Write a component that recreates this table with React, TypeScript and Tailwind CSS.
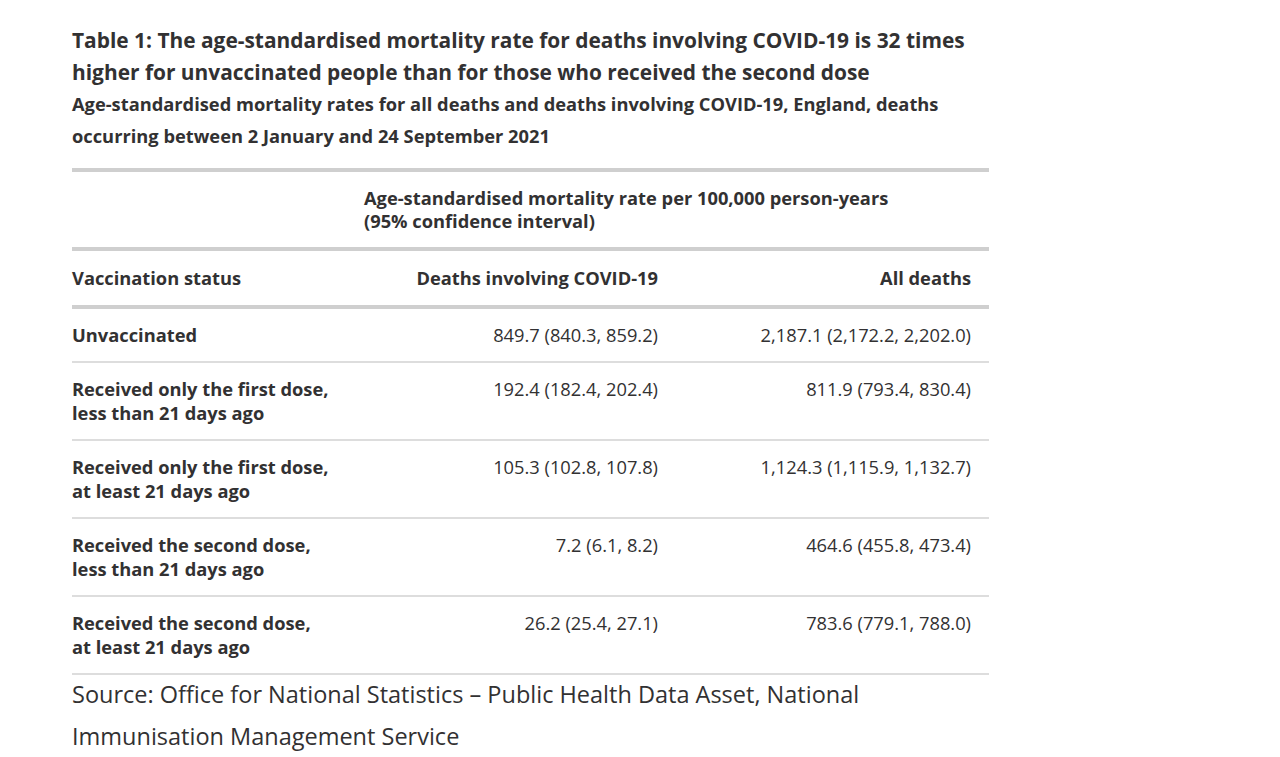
export default function App() {
  const rows = [
    ["Unvaccinated", "", "849.7 (840.3, 859.2)", "2,187.1 (2,172.2, 2,202.0)"],
    ["Received only the first dose,", "less than 21 days ago", "192.4 (182.4, 202.4)", "811.9 (793.4, 830.4)"],
    ["Received only the first dose,", "at least 21 days ago", "105.3 (102.8, 107.8)", "1,124.3 (1,115.9, 1,132.7)"],
    ["Received the second dose,", "less than 21 days ago", "7.2 (6.1, 8.2)", "464.6 (455.8, 473.4)"],
    ["Received the second dose,", "at least 21 days ago", "26.2 (25.4, 27.1)", "783.6 (779.1, 788.0)"],
  ];

  return (
    <div className="min-h-[757px] bg-white pl-[72px] pt-[24px] text-[#323132] font-['Open_Sans',sans-serif]">
      <h1 className="text-[20.9px] font-bold leading-[32px] w-[920px]">
        Table 1: The age-standardised mortality rate for deaths involving COVID-19 is 32 times higher for unvaccinated people than for those who received the second dose
      </h1>
      <h2 className="text-[18.3px] font-bold leading-[32px] w-[900px]">
        Age-standardised mortality rates for all deaths and deaths involving COVID-19, England, deaths occurring between 2 January and 24 September 2021
      </h2>

      <table className="mt-[16px] w-[917px] border-collapse text-[18.3px] leading-[24px]">
        <thead>
          <tr className="border-t-4 border-[#cfcfcf]">
            <th className="w-[292px]"></th>
            <th colSpan={2} className="pt-[14px] pb-[15px] text-left font-bold leading-[23px]">
              Age-standardised mortality rate per 100,000 person-years
              <br />
              (95% confidence interval)
            </th>
          </tr>
          <tr className="border-t-4 border-b-4 border-[#cfcfcf]">
            <th className="py-[15px] text-left font-bold">Vaccination status</th>
            <th className="w-[312px] py-[15px] pr-[18px] text-right font-bold">Deaths involving COVID-19</th>
            <th className="py-[15px] pr-[18px] text-right font-bold">All deaths</th>
          </tr>
        </thead>
        <tbody>
          {rows.map((r, i) => (
            <tr key={i} className="border-b-2 border-[#dddddd] align-top">
              <td className="py-[14px] font-bold">
                {r[0]}
                {r[1] && (
                  <>
                    <br />
                    {r[1]}
                  </>
                )}
              </td>
              <td className="py-[14px] pr-[18px] text-right">{r[2]}</td>
              <td className="py-[14px] pr-[18px] text-right">{r[3]}</td>
            </tr>
          ))}
        </tbody>
      </table>

      <p className="-mt-[2px] w-[900px] text-[23.5px] leading-[42px]">
        Source: Office for National Statistics – Public Health Data Asset, National Immunisation Management Service
      </p>
    </div>
  );
}
